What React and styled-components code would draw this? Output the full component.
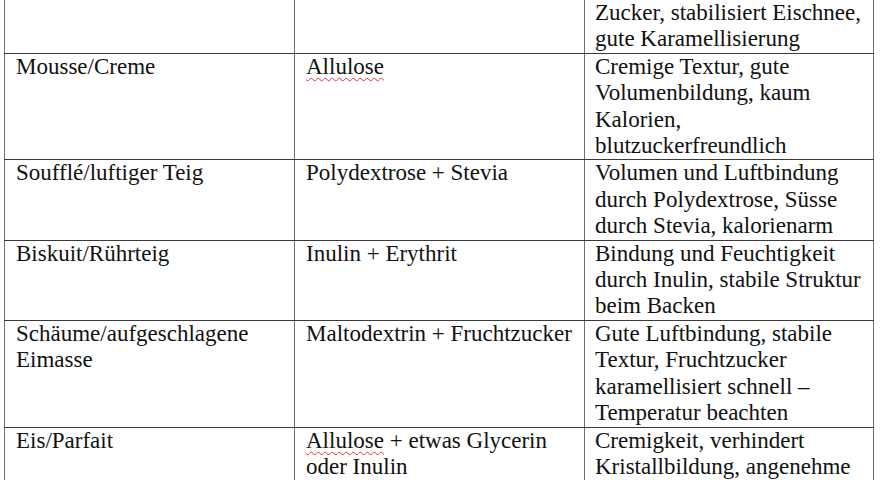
import React from "react";
import styled, { createGlobalStyle } from "styled-components";

const Global = createGlobalStyle`
  html, body { margin: 0; padding: 0; background: #ffffff; }
  body { width: 880px; height: 480px; overflow: hidden; }
`;

const Page = styled.div`
  padding-left: 4px;
  font-family: "Liberation Serif", "Times New Roman", serif;
  font-size: 23px;
  line-height: 26.4px;
  color: #111;
`;

const Table = styled.div`
  width: 870px;
  display: flex;
  flex-direction: column;
`;

const Row = styled.div`
  display: grid;
  grid-template-columns: 290px 290px 290px;
  border-top: ${(p) => (p.$first ? "none" : "1px solid #3a3a3a")};
`;

const Cell = styled.div`
  border-left: 1px solid #707070;
  padding: 0 6px 0 11px;
  &:last-child {
    border-right: 1px solid #707070;
    padding-left: 10px;
  }
`;

const Misspelled = styled.span`
  text-decoration: underline wavy #d9363e;
  text-decoration-thickness: 1px;
  text-underline-offset: 3px;
  text-decoration-skip-ink: none;
`;

const rows = [
  ["", "", "Zucker, stabilisiert Eischnee, gute Karamellisierung"],
  [
    "Mousse/Creme",
    <Misspelled key="a">Allulose</Misspelled>,
    "Cremige Textur, gute Volumenbildung, kaum Kalorien, blutzuckerfreundlich",
  ],
  [
    "Soufflé/luftiger Teig",
    "Polydextrose + Stevia",
    "Volumen und Luftbindung durch Polydextrose, Süsse durch Stevia, kalorienarm",
  ],
  [
    "Biskuit/Rührteig",
    "Inulin + Erythrit",
    "Bindung und Feuchtigkeit durch Inulin, stabile Struktur beim Backen",
  ],
  [
    "Schäume/aufgeschlagene Eimasse",
    "Maltodextrin + Fruchtzucker",
    "Gute Luftbindung, stabile Textur, Fruchtzucker karamellisiert schnell – Temperatur beachten",
  ],
  [
    "Eis/Parfait",
    <>
      <Misspelled>Allulose</Misspelled> + etwas Glycerin oder Inulin
    </>,
    "Cremigkeit, verhindert Kristallbildung, angenehme Textur",
  ],
];

export default function App() {
  return (
    <>
      <Global />
      <Page>
        <Table>
          {rows.map((r, i) => (
            <Row key={i} $first={i === 0}>
              {r.map((c, j) => (
                <Cell key={j}>{c}</Cell>
              ))}
            </Row>
          ))}
        </Table>
      </Page>
    </>
  );
}
